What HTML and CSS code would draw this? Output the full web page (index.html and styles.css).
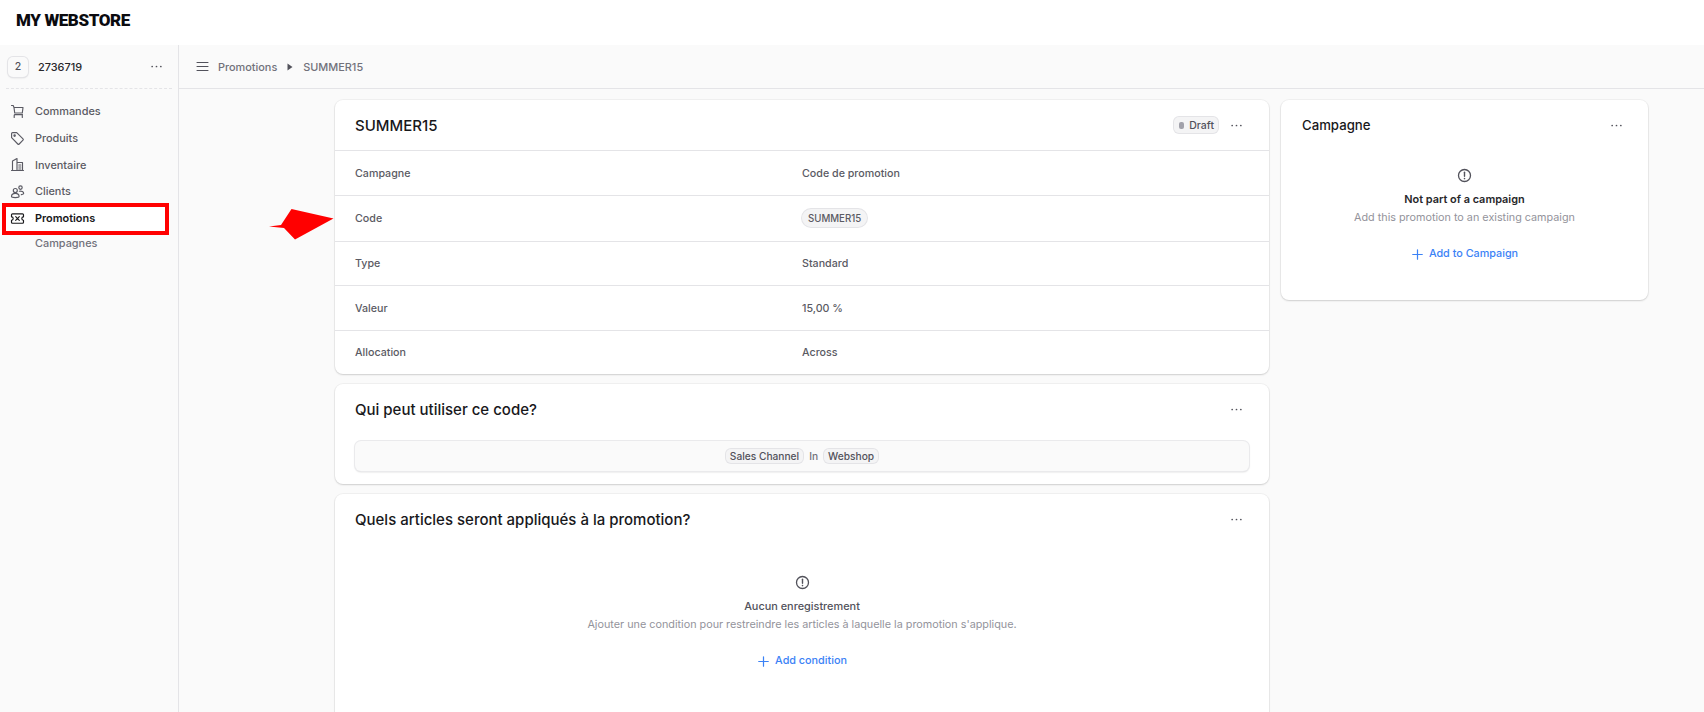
FILE: index.html
```html
<!DOCTYPE html>
<html lang="fr">
<head>
<meta charset="utf-8">
<title>SUMMER15</title>
<link rel="stylesheet" href="styles.css">
</head>
<body>
<svg class="sprite" width="0" height="0" aria-hidden="true">
  <symbol id="dots" viewBox="0 0 15 15"><circle cx="2.5" cy="7.5" r="1"/><circle cx="7.5" cy="7.5" r="1"/><circle cx="12.5" cy="7.5" r="1"/></symbol>
  <symbol id="alert" viewBox="0 0 15 15"><circle cx="7.5" cy="7.5" r="6" fill="none" stroke="currentColor" stroke-width="1.3"/><path d="M7.5 4.2v4" fill="none" stroke="currentColor" stroke-width="1.4" stroke-linecap="round"/><circle cx="7.5" cy="10.6" r=".8" fill="currentColor"/></symbol>
  <symbol id="plus" viewBox="0 0 15 15"><path d="M7.5 2v11M2 7.5h11" fill="none" stroke="currentColor" stroke-width="1.4" stroke-linecap="round"/></symbol>
</svg>

<header class="topbar"><span class="logo">MY WEBSTORE</span></header>

<div class="shell">
  <aside class="sidebar">
    <div class="store">
      <span class="avatar">2</span>
      <span class="store-name">2736719</span>
      <svg class="dots dots-side"><use href="#dots"/></svg>
    </div>
    <nav class="nav">
      <a class="nav-item">
        <svg class="nav-icon" viewBox="0 0 15 15"><path d="M1.5 1.5h1.700l.8 2m0 0 .7 5.500h7.600l.7-5.500H4zM4.200 13.500v-2c0-.5.4-.9.9-.9h7.400M12.300 13.500v-2.900"/></svg>
        Commandes
      </a>
      <a class="nav-item">
        <svg class="nav-icon" viewBox="0 0 15 15"><path d="M1.600 2.600c0-.6.4-1 1-1h4.100l6.300 6.200c.4.4.4 1 0 1.400l-3.800 3.800c-.4.4-1 .4-1.400 0L1.600 6.700z"/><circle cx="4.600" cy="4.600" r=".7"/></svg>
        Produits
      </a>
      <a class="nav-item">
        <svg class="nav-icon" viewBox="0 0 15 15"><path d="M2.500 13.500V4L7 1.500v12M1.500 13.500h12M7 5.500h5.500v8M8.800 8h2M8.800 10h2M8.800 12h2"/></svg>
        Inventaire
      </a>
      <a class="nav-item">
        <svg class="nav-icon" viewBox="0 0 15 15"><circle cx="5.300" cy="6.500" r="2"/><circle cx="10.500" cy="3.600" r="1.700"/><path d="M1.500 12.600c0-2 1.700-3.200 3.800-3.200s3.800 1.200 3.800 3.200c0 .6-1.600 1-3.800 1s-3.800-.4-3.800-1zM9.300 7.200c2.500-.4 4.400.7 4.400 2.400 0 .6-.9.9-2.400 1"/></svg>
        Clients
      </a>
      <a class="nav-item nav-item-active">
        <svg class="nav-icon" viewBox="0 0 15 15"><path d="M2.500 2.800h10c.6 0 1 .4 1 1v2a1.700 1.700 0 0 0 0 3.400v2c0 .6-.4 1-1 1h-10c-.6 0-1-.4-1-1v-2a1.700 1.700 0 0 0 0-3.400v-2c0-.6.4-1 1-1zM5.700 5.700l3.600 3.600M9.300 5.700l-3.600 3.600"/></svg>
        Promotions
      </a>
      <a class="nav-sub">Campagnes</a>
    </nav>
    <div class="nav-highlight"></div>
  </aside>

  <div class="workspace">
    <div class="crumbs">
      <svg class="menu-icon" viewBox="0 0 15 15"><path d="M2 3.500h11M2 7.500h11M2 11.500h11"/></svg>
      <span>Promotions</span>
      <svg class="crumb-sep" viewBox="0 0 6 8"><path d="M.5.500 5.500 4 .5 7.500z"/></svg>
      <span>SUMMER15</span>
    </div>

    <main class="content">
      <div class="col-main">
        <section class="card">
          <div class="card-head card-head-ruled">
            <h2 class="card-title">SUMMER15</h2>
            <div class="head-actions">
              <span class="status"><i class="status-dot"></i>Draft</span>
              <svg class="dots"><use href="#dots"/></svg>
            </div>
          </div>
          <div class="row"><span>Campagne</span><span>Code de promotion</span></div>
          <div class="row row-tall"><span>Code</span><span><span class="code-pill">SUMMER15</span></span></div>
          <div class="row row-short"><span>Type</span><span>Standard</span></div>
          <div class="row"><span>Valeur</span><span>15,00 %</span></div>
          <div class="row row-last"><span>Allocation</span><span>Across</span></div>
        </section>

        <section class="card card-rules">
          <div class="card-head card-head-plain">
            <h2 class="card-title">Qui peut utiliser ce code?</h2>
            <svg class="dots"><use href="#dots"/></svg>
          </div>
          <div class="rule-box">
            <span class="chip">Sales Channel</span>
            <span class="rule-op">In</span>
            <span class="chip">Webshop</span>
          </div>
        </section>

        <section class="card card-items">
          <div class="card-head card-head-plain">
            <h2 class="card-title">Quels articles seront appliqués à la promotion?</h2>
            <svg class="dots"><use href="#dots"/></svg>
          </div>
          <div class="empty empty-items">
            <svg class="empty-icon"><use href="#alert"/></svg>
            <p class="empty-title empty-title-muted">Aucun enregistrement</p>
            <p class="empty-text">Ajouter une condition pour restreindre les articles à laquelle la promotion s'applique.</p>
            <a class="add-link"><svg class="plus-icon"><use href="#plus"/></svg>Add condition</a>
          </div>
        </section>
      </div>

      <div class="col-side">
        <section class="card card-campaign">
          <div class="card-head card-head-plain">
            <h2 class="card-title card-title-side">Campagne</h2>
            <svg class="dots"><use href="#dots"/></svg>
          </div>
          <div class="empty empty-campaign">
            <svg class="empty-icon"><use href="#alert"/></svg>
            <p class="empty-title">Not part of a campaign</p>
            <p class="empty-text">Add this promotion to an existing campaign</p>
            <a class="add-link"><svg class="plus-icon"><use href="#plus"/></svg>Add to Campaign</a>
          </div>
        </section>
      </div>
    </main>
  </div>
</div>

<svg class="arrow" viewBox="0 0 66 32" aria-hidden="true"><path d="M0 17.500 12 16 22.500 0 64.500 9.500 26 30.500 15 19z"/></svg>
</body>
</html>
```

FILE: styles.css
```css
* { box-sizing: border-box; }
html, body { margin: 0; height: 712px; overflow: hidden; }
body {
  position: relative;
  background: #fafafa;
  color: #18181b;
  font-family: Inter, "Liberation Sans", sans-serif;
  font-size: 10.900px;
  font-weight: 500;
}
p, h2 { margin: 0; }
.sprite { position: absolute; }

.topbar {
  height: 45px;
  background: #fff;
  display: flex;
  align-items: center;
  padding: 0 0 6px 16px;
}
.logo {
  font-family: Roboto, "Liberation Sans", sans-serif;
  font-size: 17px;
  font-weight: 900;
  color: #0b0b0f;
  letter-spacing: -.4px;
}

.shell { display: flex; height: 667px; overflow: hidden; }
.sidebar {
  position: relative;
  width: 179px;
  flex: none;
  border-right: 1px solid #e4e4e7;
}
.store {
  height: 44px;
  margin: 0 6px;
  padding-left: 2px;
  display: flex;
  align-items: center;
  border-bottom: 1px dashed #e4e4e7;
}
.avatar {
  width: 20px;
  height: 20px;
  border-radius: 5px;
  background: #fafafa;
  box-shadow: 0 0 0 1px #e4e4e7, 0 1px 2px rgba(0,0,0,.15);
  display: flex;
  align-items: center;
  justify-content: center;
  font-size: 10.500px;
  color: #52525b;
}
.store-name { margin-left: 10px; color: #27272a; }
.dots { width: 13px; height: 13px; fill: #52525b; flex: none; }
.dots-side { margin-left: auto; margin-right: 9px; }

.nav { padding: 9px 0 0; display: flex; flex-direction: column; }
.nav-item {
  height: 26.700px;
  display: flex;
  align-items: center;
  gap: 10px;
  padding-left: 10px;
  color: #5a5a63;
}
.nav-item-active { color: #18181b; background: #fff; margin: 0 9px 0 4px; padding-left: 6px; font-weight: 600; }
.nav-sub { height: 23px; display: flex; align-items: center; padding-left: 35px; color: #71717a; }
.nav-icon {
  width: 15px;
  height: 15px;
  flex: none;
  fill: none;
  stroke: currentColor;
  stroke-width: 1.150;
  stroke-linejoin: round;
  stroke-linecap: round;
}
.nav-highlight {
  position: absolute;
  left: 2px;
  top: 158px;
  width: 167px;
  height: 32px;
  border: 4px solid #f00;
}

.workspace { flex: 1; min-width: 0; }
.crumbs {
  height: 44px;
  display: flex;
  align-items: center;
  padding-left: 16px;
  border-bottom: 1px solid #e4e4e7;
  color: #71717a;
}
.menu-icon { width: 15px; height: 15px; margin-right: 8px; fill: none; stroke: #52525b; stroke-width: 1.100; stroke-linecap: round; }
.crumb-sep { width: 6px; height: 8px; margin: 0 10px; fill: #52525b; }

.content { display: flex; gap: 12px; padding: 11px 0 0 156px; height: 623px; overflow: hidden; }
.col-main { width: 934px; display: flex; flex-direction: column; gap: 10px; flex: none; }
.col-main .card-head { padding-right: 26px; }
.col-side { width: 367px; flex: none; }
.card {
  background: #fff;
  border-radius: 8px;
  box-shadow: 0 0 0 1px rgba(0,0,0,.04), 0 1px 2px rgba(0,0,0,.14);
  flex: none;
}
.card-head {
  display: flex;
  align-items: center;
  justify-content: space-between;
  padding: 0 25px 0 20px;
}
.card-head-ruled { height: 51px; border-bottom: 1px solid #e4e4e7; }
.card-head-plain { height: 50px; }
.card-title { font-size: 15px; font-weight: 500; color: #18181b; }
.card-title-side { font-size: 13.200px; margin-left: 1px; }
.head-actions { display: flex; align-items: center; gap: 12px; }
.status {
  display: inline-flex;
  align-items: center;
  gap: 5px;
  height: 16px;
  padding: 0 4px 0 5px;
  border-radius: 5px;
  background: #f4f4f5;
  box-shadow: 0 0 0 1px #e4e4e7;
  font-size: 10.500px;
  color: #52525b;
}
.status-dot { width: 5px; height: 7px; border-radius: 2px; background: #a1a1aa; }

.row {
  display: grid;
  grid-template-columns: 1fr 1fr;
  align-items: center;
  height: 45px;
  padding: 0 20px;
  border-bottom: 1px solid #e4e4e7;
  color: #5a5a63;
  font-size: 10.700px;
}
.row-tall { height: 45.500px; }
.row-short { height: 44.500px; }
.row-last { height: 43px; padding-bottom: 1px; border-bottom: 0; }
.code-pill {
  display: inline-flex;
  align-items: center;
  height: 18px;
  padding: 0 6px;
  border-radius: 9px;
  background: #f4f4f5;
  box-shadow: 0 0 0 1px #e4e4e7;
  font-size: 9.700px;
}

.card-rules { height: 100px; }
.rule-box {
  margin: 7px 20px 0;
  height: 30px;
  border-radius: 6px;
  background: #fafafa;
  box-shadow: 0 0 0 1px #eaeaec, 0 1px 2px rgba(0,0,0,.2);
  display: flex;
  align-items: center;
  justify-content: center;
  gap: 6px;
  font-size: 10.200px;
  color: #52525b;
}
.chip {
  padding: 1px 4px;
  border-radius: 5px;
  background: #f4f4f5;
  box-shadow: 0 0 0 1px #e4e4e7;
}
.rule-op { color: #71717a; }

.card-items { height: 260px; }
.card-campaign { height: 200px; }
.empty { display: flex; flex-direction: column; align-items: center; }
.empty-items { padding-top: 31px; }
.empty-campaign { padding-top: 18px; }
.empty-icon { width: 15px; height: 15px; color: #52525b; margin-bottom: 8px; }
.empty-title { font-size: 10.900px; font-weight: 600; line-height: 17px; color: #27272a; }
.empty-title-muted { color: #52525b; font-weight: 500; }
.empty-text { font-size: 10.800px; font-weight: 400; line-height: 20px; color: #93939b; margin-bottom: 16px; }
.add-link { display: flex; align-items: center; gap: 5px; font-size: 10.800px; color: #3b82f6; line-height: 20px; }
.plus-icon { width: 13px; height: 13px; color: #3b82f6; }

.arrow {
  position: absolute;
  left: 269px;
  top: 209px;
  width: 66px;
  height: 32px;
  fill: #f00;
}
```
